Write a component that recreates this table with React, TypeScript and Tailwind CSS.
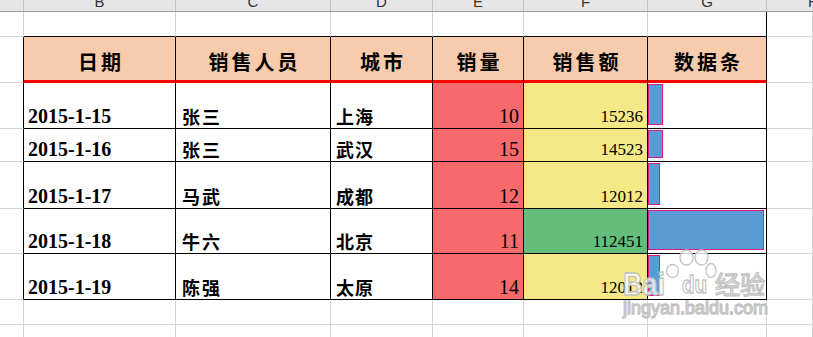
import React from 'react'

const serif = "font-['Liberation_Serif','Times_New_Roman',serif]"
const cjk = "font-['Noto_Sans_CJK_SC','Noto_Sans',sans-serif]"

type Row = { date: string; person: string; city: string; qty: number; amount: number; h: string; amountBg: string }

const rows: Row[] = [
  { date: '2015-1-15', person: '张三', city: '上海', qty: 10, amount: 15236, h: 'h-[46px]', amountBg: 'bg-[#f5e886]' },
  { date: '2015-1-16', person: '张三', city: '武汉', qty: 15, amount: 14523, h: 'h-[33px]', amountBg: 'bg-[#f5e886]' },
  { date: '2015-1-17', person: '马武', city: '成都', qty: 12, amount: 12012, h: 'h-[47px]', amountBg: 'bg-[#f5e886]' },
  { date: '2015-1-18', person: '牛六', city: '北京', qty: 11, amount: 112451, h: 'h-[45px]', amountBg: 'bg-[#63be7b]' },
  { date: '2015-1-19', person: '陈强', city: '太原', qty: 14, amount: 12012, h: 'h-[46px]', amountBg: 'bg-[#f5e886]' },
]

const minAmt = Math.min(...rows.map(r => r.amount))
const maxAmt = Math.max(...rows.map(r => r.amount))

const grid = 'grid grid-cols-[24px_152px_155px_102px_91px_124px_119px_1fr]'
const gray = 'border-r border-b border-[#d4d4d4]'

function Watermark() {
  return (
    <svg className="absolute left-[618px] top-[244px]" width="160" height="80" viewBox="0 0 160 80">
      <g fill="rgba(255,255,255,0.8)" stroke="#c2c2c2" strokeWidth="1.3">
        <text x="5" y="51" fontSize="31" fontWeight="700" fontFamily="Liberation Sans, Arial, sans-serif" textLength="42" lengthAdjust="spacingAndGlyphs">Bai</text>
        <ellipse cx="54.5" cy="27" rx="6" ry="6.5" />
        <ellipse cx="68.5" cy="13.5" rx="6.5" ry="7.5" />
        <ellipse cx="83.5" cy="13.5" rx="6.5" ry="7.5" />
        <ellipse cx="93" cy="26.5" rx="5" ry="7" />
        <text x="64" y="49" fontSize="24" fontWeight="700" fontFamily="Liberation Sans, Arial, sans-serif" textLength="25" lengthAdjust="spacingAndGlyphs">du</text>
        <text x="97" y="50" fontSize="25" fontFamily="Noto Sans CJK SC, sans-serif">经验</text>
        <text x="5" y="70" fontSize="18" fontFamily="Liberation Sans, Arial, sans-serif" textLength="145" lengthAdjust="spacingAndGlyphs">jingyan.baidu.com</text>
      </g>
    </svg>
  )
}

export default function App() {
  const letters = ['', 'B', 'C', 'D', 'E', 'F', 'G', 'H']
  const headers = ['日期', '销售人员', '城市', '销量', '销售额', '数据条']

  return (
    <div className="relative w-[813px] h-[337px] overflow-hidden bg-white text-black">
      {/* column letters */}
      <div className={`${grid} h-[12px] bg-[#e6e6e6] border-b border-[#9e9e9e] overflow-hidden font-['Liberation_Sans',Arial,sans-serif] text-[15px] text-[#333]`}>
        {letters.map((l, i) => (
          <div
            key={i}
            className={`h-[11px] flex items-end leading-none border-r border-[#c4c4c4] ${i === 7 ? 'pl-[41px]' : 'justify-center'}`}
          >
            <span className="mb-[2px]">{l}</span>
          </div>
        ))}
      </div>

      {/* empty row above table */}
      <div className={`${grid} h-[25px]`}>
        {letters.map((_, i) => (
          <div key={i} className={`border-r border-b ${i >= 1 && i <= 6 ? 'border-b-black' : 'border-b-[#d4d4d4]'} ${i === 6 ? 'border-r-black' : 'border-r-[#d4d4d4]'}`} />
        ))}
      </div>

      {/* header row */}
      <div className={`${grid} h-[46px]`}>
        <div className="border-r border-r-black border-b border-b-[#d4d4d4]" />
        {headers.map(h => (
          <div key={h} className={`bg-[#f8cbad] border-r border-black border-b-[3px] border-b-[#ff0000] flex items-center justify-center pt-[6px] ${cjk} font-bold text-[20px] tracking-[3px] pl-[3px]`}>
            {h}
          </div>
        ))}
        <div className={gray} />
      </div>

      {/* data rows */}
      {rows.map(r => {
        const barW = 12 + ((r.amount - minAmt) / (maxAmt - minAmt)) * 104
        return (
          <div key={r.date} className={`${grid} ${r.h}`}>
            <div className="border-r border-r-black border-b border-b-[#d4d4d4]" />
            <div className={`border-r border-b border-black flex items-end pl-[4px] pb-[2px] ${serif} font-bold text-[20px] leading-none`}>
              {r.date}
            </div>
            <div className={`border-r border-b border-black flex items-end pl-[6px] pb-[3px] ${cjk} font-bold text-[18px] leading-none tracking-[2px]`}>
              {r.person}
            </div>
            <div className={`border-r border-b border-black flex items-end pl-[5px] pb-[3px] ${cjk} font-bold text-[18px] leading-none tracking-[1px]`}>
              {r.city}
            </div>
            <div className={`bg-[#f8696b] border-r border-b border-black flex items-end justify-end pr-[4px] pb-[2px] ${serif} text-[20px] leading-none`}>
              {r.qty}
            </div>
            <div className={`${r.amountBg} border-r border-b border-black flex items-end justify-end pr-[4px] pb-[3px] ${serif} text-[17px] leading-none`}>
              {r.amount}
            </div>
            <div className="border-r border-b border-black pt-[1px] pb-[3px] flex">
              <div className="h-full bg-[#5b9bd5] border border-[#dc1a82]" style={{ width: barW }} />
            </div>
            <div className={gray} />
          </div>
        )
      })}

      {/* empty rows below */}
      {['h-[25px]', 'h-[25px]'].map((h, k) => (
        <div key={k} className={`${grid} ${h}`}>
          {letters.map((_, i) => (
            <div key={i} className={gray} />
          ))}
        </div>
      ))}

      <Watermark />
    </div>
  )
}
